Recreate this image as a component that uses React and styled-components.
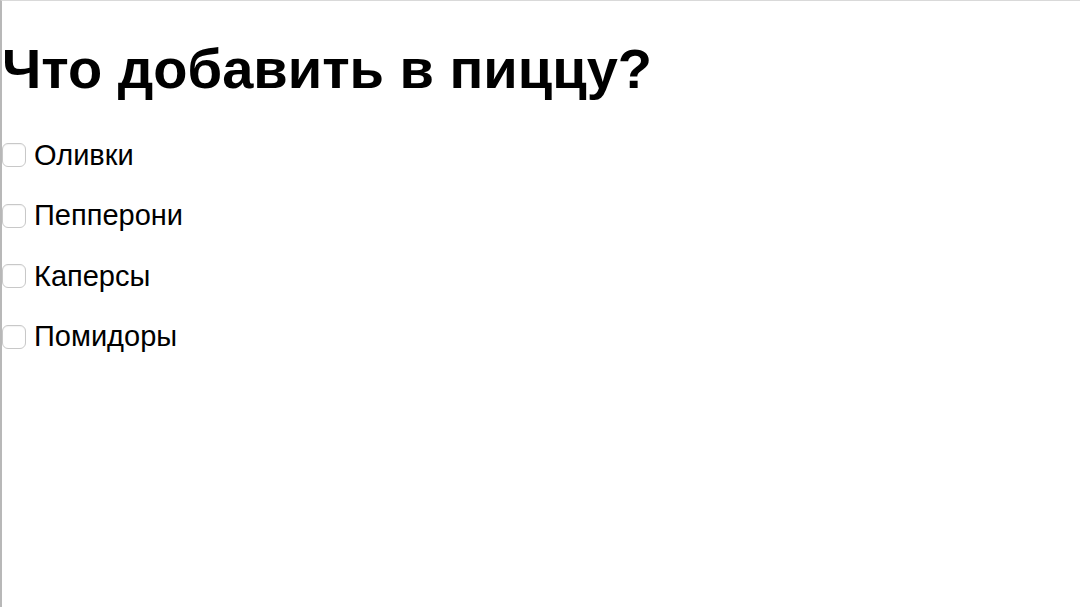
import React from "react";
import styled, { createGlobalStyle } from "styled-components";

const GlobalStyle = createGlobalStyle`
  html, body {
    margin: 0;
    padding: 0;
    background: #fff;
  }
  body {
    font-family: "Liberation Sans", Arial, sans-serif;
    color: #000;
  }
`;

const Frame = styled.div`
  box-sizing: border-box;
  width: 1080px;
  height: 607px;
  border-top: 1px solid #d9d9d9;
  border-left: 2px solid #b8b8b8;
  overflow: hidden;
`;

const Title = styled.h1`
  margin: 32px 0 36px;
  font-size: 56px;
  line-height: 72px;
  font-weight: 700;
`;

const List = styled.div`
  display: flex;
  flex-direction: column;
  gap: 32.5px;
`;

const Option = styled.label`
  display: flex;
  align-items: center;
  gap: 8px;
  height: 28px;
  font-size: 29px;
  cursor: pointer;
`;

const Box = styled.input.attrs({ type: "checkbox" })`
  appearance: none;
  margin: 0;
  width: 24px;
  height: 24px;
  border: 1px solid #c8c8c8;
  border-radius: 6px;
  background: #fff;
  box-sizing: border-box;
  box-shadow: inset 0 1px 1px rgba(0, 0, 0, 0.05);

  &:checked {
    background: #1a73e8;
    border-color: #1a73e8;
  }
`;

const toppings = ["Оливки", "Пепперони", "Каперсы", "Помидоры"];

export default function App() {
  return (
    <>
      <GlobalStyle />
      <Frame>
        <Title>Что добавить в пиццу?</Title>
        <List>
          {toppings.map((t) => (
            <Option key={t}>
              <Box />
              {t}
            </Option>
          ))}
        </List>
      </Frame>
    </>
  );
}
